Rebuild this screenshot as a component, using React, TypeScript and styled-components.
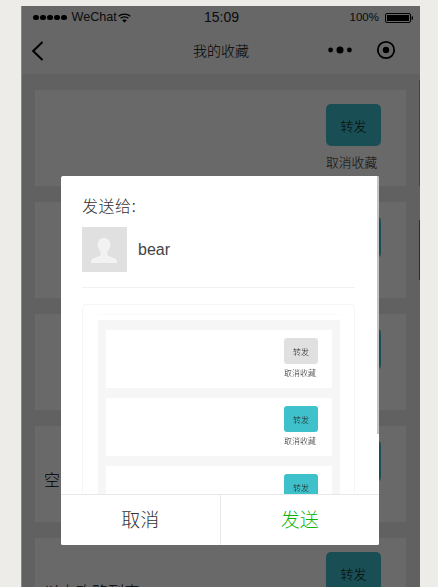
import React from "react";
import styled, { createGlobalStyle } from "styled-components";

const Global = createGlobalStyle`
  html, body { margin: 0; padding: 0; height: 587px; overflow: hidden; background: #edece8; }
  body { font-family: "Liberation Sans", "Noto Sans CJK SC", sans-serif; font-weight: 300; }
  * { box-sizing: border-box; }
`;

const Stage = styled.div`
  padding: 6px 18px 0 21px;
  height: 587px;
  overflow: hidden;
`;

const Phone = styled.div`
  position: relative;
  height: 581px;
  overflow: hidden;
  background: #ececec;
`;

const TopBars = styled.div`
  background: #f9f9f9;
  color: #222;
`;

const Status = styled.div`
  display: flex;
  align-items: center;
  height: 24px;
  padding: 0 7px 0 12px;
`;

const Signal = styled.div`
  display: flex;
  gap: 1.4px;
  margin: -1px 5px 0 0;
`;

const Dot = styled.span`
  width: 5.6px;
  height: 5.6px;
  border-radius: 50%;
  background: #000;
`;

const Carrier = styled.span`
  font-size: 12.6px;
  width: 46px;
  margin-top: -2px;
`;

const Clock = styled.span`
  position: absolute;
  left: 183px;
  margin-top: -2px;
  font-size: 14px;
`;

const Percent = styled.span`
  margin: -2px 6px 0 auto;
  font-size: 11.5px;
`;

const Nav = styled.div`
  position: relative;
  display: flex;
  align-items: center;
  height: 44px;
  padding: 0 24px 4px 10px;
`;

const BackIcon = styled.svg`
  margin-top: 2px;
`;

const NavTitle = styled.div`
  position: absolute;
  left: 172px;
  top: 11px;
  font-size: 14px;
  line-height: 20px;
  color: #000;
`;

const NavRight = styled.div`
  display: flex;
  align-items: center;
  gap: 24px;
  margin-left: auto;
`;

const List = styled.div`
  display: flex;
  flex-direction: column;
  gap: 16px;
  padding: 16px 14px 0;
`;

const Card = styled.div`
  display: flex;
  justify-content: space-between;
  flex: none;
  height: 96px;
  padding: 14px 25px 0 9px;
  background: #fff;
`;

const CardTitle = styled.div`
  padding-top: 29px;
  font-size: 16px;
  line-height: 24px;
  color: #000;
`;

const Actions = styled.div`
  display: flex;
  flex-direction: column;
  width: 55px;
`;

const Forward = styled.div`
  display: flex;
  align-items: center;
  justify-content: center;
  height: 42px;
  border-radius: 5px;
  background: #3ec1cb;
  font-size: 13px;
  color: #111;
`;

const Unfav = styled.div`
  margin-top: 8px;
  font-size: 12.8px;
  line-height: 18px;
  white-space: nowrap;
  color: #222;
`;

const Scrim = styled.div`
  position: absolute;
  inset: 0;
  background: rgba(0, 0, 0, 0.59);
`;

const EdgeLine = styled.div<{ $top: number; $height: number; $color: string }>`
  position: absolute;
  right: 0;
  top: ${(p) => p.$top}px;
  width: 1px;
  height: ${(p) => p.$height}px;
  background: ${(p) => p.$color};
`;

const SideLine = styled.div<{ $side: "left" | "right" }>`
  position: absolute;
  ${(p) => p.$side}: 0;
  top: 0;
  bottom: 0;
  width: 1px;
  background: #888;
`;

const Dialog = styled.div`
  position: absolute;
  left: 40px;
  top: 170px;
  width: 318px;
  height: 369px;
  display: flex;
  flex-direction: column;
  border-radius: 2px;
  overflow: hidden;
  background: #fff;
`;

const DialogScroll = styled.div`
  position: relative;
  flex: 1;
  min-height: 0;
  overflow: hidden;
  padding: 20px 24px 0 21px;
`;

const ScrollThumb = styled.div`
  position: absolute;
  top: 0;
  right: 0;
  width: 2px;
  height: 258px;
  background: #c4c4c4;
`;

const SendTo = styled.div`
  font-size: 16px;
  line-height: 22px;
  letter-spacing: 0.5px;
  color: #333;
`;

const Person = styled.div`
  display: flex;
  align-items: center;
  gap: 11px;
  margin-top: 9px;
  padding-bottom: 15px;
  border-bottom: 1px solid #f1f1f1;
`;

const Avatar = styled.div`
  display: flex;
  width: 45px;
  height: 45px;
  background: #e0e0e0;
`;

const PersonName = styled.span`
  font-size: 16px;
  color: #444;
`;

const Preview = styled.div`
  margin-top: 16px;
  height: 260px;
  padding: 9px 14px 0 15px;
  border: 1px solid #f5f5f5;
  border-radius: 4px;
`;

const MiniTopLine = styled.div`
  height: 1px;
  margin-bottom: 5px;
  background: #fafafa;
`;

const MiniPage = styled.div`
  display: flex;
  flex-direction: column;
  gap: 10px;
  height: 240px;
  padding: 10px 8px 0;
  background: #f6f6f6;
  filter: blur(0.35px);
`;

const MiniCard = styled.div`
  display: flex;
  flex: none;
  justify-content: flex-end;
  height: 58px;
  padding: 8px 14px 0 0;
  background: #fff;
`;

const MiniActions = styled.div`
  display: flex;
  flex-direction: column;
  width: 34px;
`;

const MiniForward = styled.div<{ $off?: boolean }>`
  display: flex;
  align-items: center;
  justify-content: center;
  height: 26px;
  border-radius: 3px;
  background: ${(p) => (p.$off ? "#e0e0e0" : "#3ec1cb")};
  font-size: 8px;
  color: #222;
`;

const MiniUnfav = styled.div`
  margin-top: 5px;
  font-size: 8px;
  line-height: 10px;
  white-space: nowrap;
  color: #222;
`;

const Footer = styled.div`
  display: flex;
  flex: none;
  height: 51px;
  border-top: 1px solid #e8e8e8;
  background: #fff;
`;

const FootButton = styled.div<{ $green?: boolean }>`
  display: flex;
  align-items: center;
  justify-content: center;
  flex: 1;
  padding-bottom: 3px;
  font-size: 19px;
  color: ${(p) => (p.$green ? "#09b309" : "#333")};
  & + & {
    border-left: 1px solid #e8e8e8;
  }
`;

const cards = ["", "", "", "空", "以上攻略列表"];

export default function App() {
  return (
    <Stage>
      <Global />
      <Phone>
        <TopBars>
          <Status>
            <Signal>
              {[0, 1, 2, 3, 4].map((i) => (
                <Dot key={i} />
              ))}
            </Signal>
            <Carrier>WeChat</Carrier>
            <svg width="13" height="10" viewBox="0 0 13 10" fill="none" stroke="#000">
              <path d="M.6 3.2C3.8.4 9.2.4 12.4 3.2" strokeWidth="1.3" />
              <path d="M2.6 5.3c2.2-1.8 5.6-1.8 7.8 0" strokeWidth="1.3" />
              <path d="M4.7 7.3c1.1-.8 2.5-.8 3.6 0L6.5 9.3z" fill="#000" strokeWidth=".6" />
            </svg>
            <Clock>15:09</Clock>
            <Percent>100%</Percent>
            <svg width="28" height="10" viewBox="0 0 28 10">
              <rect x=".5" y=".5" width="25" height="9" rx="1.5" fill="none" stroke="#000" />
              <rect x="2" y="2" width="22" height="6" fill="#000" />
              <rect x="26.6" y="3.2" width="1.4" height="3.6" rx=".6" fill="#000" />
            </svg>
          </Status>
          <Nav>
            <BackIcon width="14" height="20" viewBox="0 0 14 20" fill="none" stroke="#000" strokeWidth="2">
              <path d="M11.5 1 2.200 10l9.300 9" />
            </BackIcon>
            <NavTitle>我的收藏</NavTitle>
            <NavRight>
              <svg width="24" height="8" viewBox="0 0 24 8" fill="#000">
                <circle cx="2.600" cy="4" r="2.400" />
                <circle cx="12" cy="4" r="3.500" />
                <circle cx="21.400" cy="4" r="2.400" />
              </svg>
              <svg width="20" height="20" viewBox="0 0 20 20" fill="none" stroke="#000">
                <circle cx="10" cy="10" r="8.200" strokeWidth="1.800" />
                <circle cx="10" cy="10" r="3.200" fill="#000" stroke="none" />
              </svg>
            </NavRight>
          </Nav>
        </TopBars>
        <List>
          {cards.map((title, i) => (
            <Card key={i}>
              <CardTitle>{title}</CardTitle>
              <Actions>
                <Forward>转发</Forward>
                <Unfav>取消收藏</Unfav>
              </Actions>
            </Card>
          ))}
        </List>
        <Scrim />
        <SideLine $side="left" />
        <EdgeLine $top={74} $height={106} $color="#1c5254" />
        <EdgeLine $top={214} $height={60} $color="#2c2c2c" />
        <Dialog>
          <DialogScroll>
            <SendTo>发送给:</SendTo>
            <Person>
              <Avatar>
                <svg width="45" height="45" viewBox="0 0 45 45" fill="#f2f2f2">
                  <path d="M22 11c3.700 0 6.300 2.800 6.300 6.600 0 3-1.300 5.600-3 7.300v2.200c0 1.200 1 1.900 2.600 2.500l4.800 1.800c1.500.6 2.300 1.600 2.300 3.100v1.500H9v-1.500c0-1.500.8-2.500 2.300-3.100l4.800-1.800c1.600-.6 2.600-1.300 2.600-2.500v-2.200c-1.700-1.700-3-4.300-3-7.300 0-3.800 2.600-6.600 6.300-6.600z" />
                </svg>
              </Avatar>
              <PersonName>bear</PersonName>
            </Person>
            <Preview>
              <MiniTopLine />
              <MiniPage>
                {[true, false, false].map((off, i) => (
                  <MiniCard key={i}>
                    <MiniActions>
                      <MiniForward $off={off}>转发</MiniForward>
                      <MiniUnfav>取消收藏</MiniUnfav>
                    </MiniActions>
                  </MiniCard>
                ))}
              </MiniPage>
            </Preview>
            <ScrollThumb />
          </DialogScroll>
          <Footer>
            <FootButton>取消</FootButton>
            <FootButton $green>发送</FootButton>
          </Footer>
        </Dialog>
      </Phone>
    </Stage>
  );
}
